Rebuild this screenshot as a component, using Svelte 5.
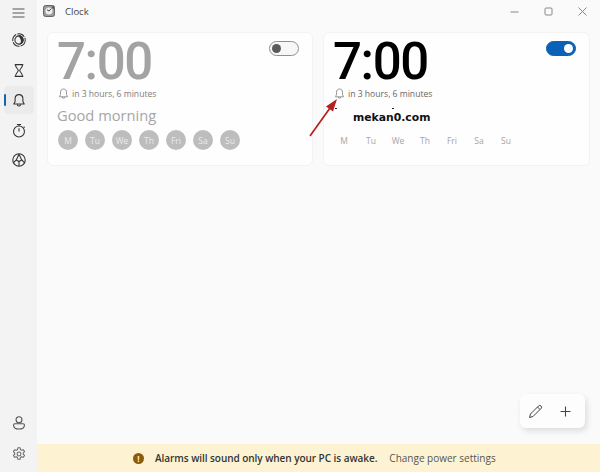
<script lang="ts">
  const days = ['M', 'Tu', 'We', 'Th', 'Fri', 'Sa', 'Su'];
</script>

<div class="window">
  <aside class="rail">
    <div class="rail__top">
      <button class="rail__btn rail__btn--menu" aria-label="Menu">
        <svg width="13" height="10" viewBox="0 0 13 10" fill="none" stroke="#555" stroke-width="1">
          <path d="M.5 1h12M.5 5h12M.5 9h12" />
        </svg>
      </button>
      <button class="rail__btn" aria-label="Focus sessions">
        <svg width="14" height="14" viewBox="0 0 18 18" fill="none" stroke="#333" stroke-width="1.300">
          <circle cx="9" cy="9" r="8" stroke-dasharray="10 1.500" />
          <circle cx="9" cy="9" r="5.300" />
          <path d="M9 3.700a5.300 5.300 0 0 1 2 10.200C13 11 12 7 9 3.700z" fill="#333" />
        </svg>
      </button>
      <button class="rail__btn" aria-label="Timer">
        <svg width="14" height="15" viewBox="0 0 18 18" fill="none" stroke="#333" stroke-width="1.400" stroke-linejoin="round">
          <path d="M3.500 1.500h11M3.500 16.500h11M4.500 1.500c0 4.500 3.500 5 3.500 7.500s-3.500 3-3.500 7.500M13.500 1.500c0 4.500-3.500 5-3.500 7.500s3.500 3 3.500 7.500" />
        </svg>
      </button>
      <button class="rail__btn rail__btn--active" aria-label="Alarm">
        <span class="rail__pip"></span>
        <svg width="14" height="15" viewBox="0 0 18 18" fill="none" stroke="#333" stroke-width="1.400" stroke-linejoin="round">
          <path d="M9 1.500c-3.200 0-5 2.500-5 5.300v3.600l-1.700 3.100h13.400L14 10.400V6.800c0-2.800-1.800-5.300-5-5.300z" />
          <path d="M6.800 13.800a2.200 2.200 0 0 0 4.400 0" />
        </svg>
      </button>
      <button class="rail__btn" aria-label="Stopwatch">
        <svg width="14" height="15" viewBox="0 0 18 18" fill="none" stroke="#333" stroke-width="1.400">
          <circle cx="9" cy="10.300" r="7" />
          <path d="M6.300 1.200h5.400M9 1.200v2M9 10.300V6M15 4l1.200 1.200" />
        </svg>
      </button>
      <button class="rail__btn" aria-label="World clock">
        <svg width="14" height="14" viewBox="0 0 18 18" fill="none" stroke="#333" stroke-width="1.400">
          <circle cx="9" cy="9" r="8" />
          <path d="M9 1.500 5.500 9 2 12.500M9 1.500 12.500 9 16 12.500M5.500 9 9 11l3.500-2M9 11v6" />
        </svg>
      </button>
    </div>
    <div class="rail__bottom">
      <button class="rail__btn" aria-label="Account">
        <svg width="14" height="14" viewBox="0 0 18 18" fill="none" stroke="#555" stroke-width="1.400">
          <circle cx="9" cy="4.800" r="3.800" />
          <path d="M2 11.500c0-.9.700-1.600 1.600-1.600h10.800c.9 0 1.600.7 1.600 1.600 0 3.500-3.300 5.300-7 5.300s-7-1.800-7-5.300z" />
        </svg>
      </button>
      <button class="rail__btn" aria-label="Settings">
        <svg width="14" height="14" viewBox="0 0 18 18" fill="none" stroke="#666" stroke-width="1.300" stroke-linejoin="round">
          <circle cx="9" cy="9" r="2.500" />
          <path d="M7.600 1h2.800l.5 2.300 1.500.9 2.300-.7 1.400 2.400-1.700 1.600v1.800l1.700 1.600-1.400 2.400-2.300-.7-1.500.9-.5 2.300H7.600l-.5-2.300-1.500-.9-2.300.7-1.400-2.400 1.700-1.600V7.900L1.900 5.900l1.400-2.400 2.300.7 1.500-.9z" />
        </svg>
      </button>
    </div>
  </aside>

  <main class="main">
    <header class="titlebar">
      <div class="titlebar__app">
        <svg width="12" height="12" viewBox="0 0 12 12">
          <rect x="0.500" y="0.500" width="11" height="11" rx="2" fill="#9a9a9a" stroke="#666" />
          <path d="M8.500 2 11 .8v3.400z" fill="#555" />
          <circle cx="6" cy="6" r="3.600" fill="#eee" />
          <path d="M6 6 8.400 3.500M6 6 4 4.800" stroke="#444" fill="none" />
        </svg>
        <span>Clock</span>
      </div>
      <div class="titlebar__controls">
        <svg width="9" height="9" viewBox="0 0 9 9" stroke="#888" fill="none"><path d="M.5 5h8" /></svg>
        <svg width="9" height="9" viewBox="0 0 9 9" stroke="#888" fill="none"><rect x="1" y="1" width="7" height="7" rx="1" /></svg>
        <svg width="9" height="9" viewBox="0 0 9 9" stroke="#888" fill="none"><path d="M.5.500l8 8M8.500.500l-8 8" /></svg>
      </div>
    </header>

    <section class="cards">
      <article class="card card--off">
        <span class="toggle"><span class="toggle__knob"></span></span>
        <div class="card__time">7:00</div>
        <div class="card__when">
          <svg width="11" height="12" viewBox="0 0 11 12" fill="none" stroke="#8a8a8a" stroke-width="0.900"><path d="M5.500 1C3.500 1 2.500 2.500 2.500 4.200v2.300L1.500 8.800h8l-1-2.300V4.200C8.500 2.500 7.500 1 5.500 1zM4.200 9a1.300 1.300 0 0 0 2.600 0" /></svg>
          <span>in 3 hours, 6 minutes</span>
        </div>
        <div class="card__name">Good morning</div>
        <div class="days">
          {#each days as day}
            <span class="days__item">{day}</span>
          {/each}
        </div>
      </article>

      <article class="card card--on">
        <span class="toggle"><span class="toggle__knob"></span></span>
        <div class="card__time">7:00</div>
        <div class="card__when">
          <svg width="11" height="12" viewBox="0 0 11 12" fill="none" stroke="#8a8a8a" stroke-width="0.900"><path d="M5.500 1C3.500 1 2.500 2.500 2.500 4.200v2.300L1.500 8.800h8l-1-2.300V4.200C8.500 2.500 7.500 1 5.500 1zM4.200 9a1.300 1.300 0 0 0 2.600 0" /></svg>
          <span>in 3 hours, 6 minutes</span>
        </div>
        <div class="card__name">mekan0.com</div>
        <div class="days">
          {#each days as day}
            <span class="days__item">{day}</span>
          {/each}
        </div>
        <svg class="arrow" width="32" height="42" viewBox="0 0 32 42" fill="none">
          <path d="M2 40 22 12" stroke="#b3201f" stroke-width="1.700" />
          <path d="M29 3 18 10.500 25 15.500z" fill="#b3201f" />
        </svg>
        <span class="speck speck--a"></span>
        <span class="speck speck--b"></span>
      </article>
    </section>

    <div class="actions">
      <div class="actions__box">
        <svg width="15" height="15" viewBox="0 0 15 15" fill="none" stroke="#444" stroke-width="1"><path d="M1.500 13.500 2.500 10 10.500 2a1.500 1.500 0 0 1 2.500 2.500L5 12.500zM9.500 3l2.500 2.500" /></svg>
        <svg width="13" height="13" viewBox="0 0 13 13" fill="none" stroke="#444" stroke-width="1.100"><path d="M6.500 1.500v10M1.500 6.500h10" /></svg>
      </div>
    </div>

    <footer class="notice">
      <span class="notice__icon">!</span>
      <strong>Alarms will sound only when your PC is awake.</strong>
      <span class="notice__link">Change power settings</span>
    </footer>
  </main>
</div>

<style>
  :global(body) {
    margin: 0;
    background: #fafafa;
  }

  .window {
    display: flex;
    width: 600px;
    height: 472px;
    overflow: hidden;
    font-family: "Open Sans", "Noto Sans", sans-serif;
    color: #333;
  }

  .rail {
    flex: 0 0 37px;
    background: #f3f3f3;
    display: flex;
    flex-direction: column;
    justify-content: space-between;
    padding-bottom: 3px;
    box-sizing: border-box;
  }

  .rail__top,
  .rail__bottom {
    display: flex;
    flex-direction: column;
    align-items: center;
  }

  .rail__bottom {
    gap: 1px;
  }

  .rail__btn {
    position: relative;
    width: 30px;
    height: 30px;
    border: 0;
    padding: 0;
    background: none;
    border-radius: 4px;
    display: flex;
    align-items: center;
    justify-content: center;
  }

  .rail__btn--menu {
    height: 25px;
  }

  .rail__btn--active {
    height: 28px;
    margin: 1px 0;
    background: #ebebeb;
  }

  .rail__pip {
    position: absolute;
    left: 0;
    top: 8px;
    width: 2px;
    height: 12px;
    border-radius: 1px;
    background: #1565a8;
  }

  .main {
    flex: 1;
    min-width: 0;
    display: flex;
    flex-direction: column;
    background: #fafafa;
  }

  .titlebar {
    flex: 0 0 32px;
    display: flex;
    align-items: center;
    justify-content: space-between;
    padding: 0 13px 10px 6px;
    box-sizing: border-box;
  }

  .titlebar__app {
    display: flex;
    align-items: center;
    gap: 10px;
    font-size: 9.500px;
    color: #444;
  }

  .titlebar__controls {
    display: flex;
    gap: 25px;
  }

  .cards {
    display: grid;
    grid-template-columns: 266px 267px;
    gap: 10px;
    padding-left: 10px;
  }

  .card {
    position: relative;
    height: 134px;
    box-sizing: border-box;
    padding: 0 9px;
    background: #fefefe;
    border: 1px solid #f3f3f3;
    border-radius: 6px;
  }

  .card__time {
    font-family: Roboto, sans-serif;
    font-size: 51px;
    font-weight: 500;
    line-height: 46px;
    letter-spacing: -1.400px;
    margin-top: 6px;
    color: #000;
  }

  .card--off .card__time {
    color: #a3a3a3;
  }

  .card__when {
    display: flex;
    align-items: center;
    gap: 3px;
    height: 18px;
    padding-left: 1px;
    font-size: 8.600px;
    color: #666;
  }

  .card--off .card__when {
    color: #7d7d7d;
  }

  .card__name {
    height: 24px;
    font-size: 14.700px;
    font-weight: 500;
    line-height: 24px;
    color: #a6a6a6;
  }

  .card--on .card__name {
    font-family: "DejaVu Sans", sans-serif;
    font-size: 10.800px;
    font-weight: 700;
    line-height: 30px;
    color: #111;
    padding-left: 20px;
  }

  .days {
    display: flex;
    gap: 7px;
    margin-top: 3px;
    padding-left: 1px;
  }

  .days__item {
    width: 20px;
    height: 20px;
    border-radius: 50%;
    background: #bdbdbd;
    color: #eaeaea;
    font-size: 8.500px;
    display: flex;
    align-items: center;
    justify-content: center;
  }

  .card--on .days__item {
    background: none;
    color: #a5a5a5;
  }

  .toggle {
    position: absolute;
    right: 13px;
    top: 8px;
    width: 30px;
    height: 15px;
    box-sizing: border-box;
    border-radius: 8px;
    border: 1px solid #8f8f8f;
    background: #f7f7f7;
    display: flex;
    align-items: center;
    padding: 0 2px;
  }

  .toggle__knob {
    width: 9px;
    height: 9px;
    border-radius: 50%;
    background: #5a5a5a;
  }

  .card--on .toggle {
    background: #0a62b8;
    border-color: #0a62b8;
    justify-content: flex-end;
  }

  .card--on .toggle__knob {
    background: #fff;
  }

  .arrow {
    position: absolute;
    left: -16px;
    top: 63px;
  }

  .speck {
    position: absolute;
    top: 75px;
    height: 1px;
    width: 2px;
    background: #222;
  }

  .speck--a {
    left: 11px;
  }

  .speck--b {
    left: 68px;
  }

  .actions {
    flex: 1;
    display: flex;
    align-items: flex-end;
    justify-content: flex-end;
    padding: 0 15px 16px 0;
  }

  .actions__box {
    width: 65px;
    height: 34px;
    box-sizing: border-box;
    padding-right: 6px;
    border-radius: 6px;
    background: #fdfdfd;
    box-shadow: 2px 3px 6px rgba(0, 0, 0, 0.12);
    display: flex;
    align-items: center;
    justify-content: center;
    gap: 16px;
  }

  .notice {
    flex: 0 0 28px;
    background: #fdf3d3;
    display: flex;
    align-items: center;
    padding-left: 96px;
    font-size: 10px;
    color: #333;
  }

  .notice strong {
    font-weight: 600;
    margin-left: 11px;
    letter-spacing: -0.050px;
  }

  .notice__icon {
    width: 11px;
    height: 11px;
    border-radius: 50%;
    background: #8f5a0a;
    color: #fdf3d3;
    font-size: 8px;
    font-weight: 700;
    line-height: 11px;
    text-align: center;
  }

  .notice__link {
    margin-left: 12px;
    color: #555;
  }
</style>
